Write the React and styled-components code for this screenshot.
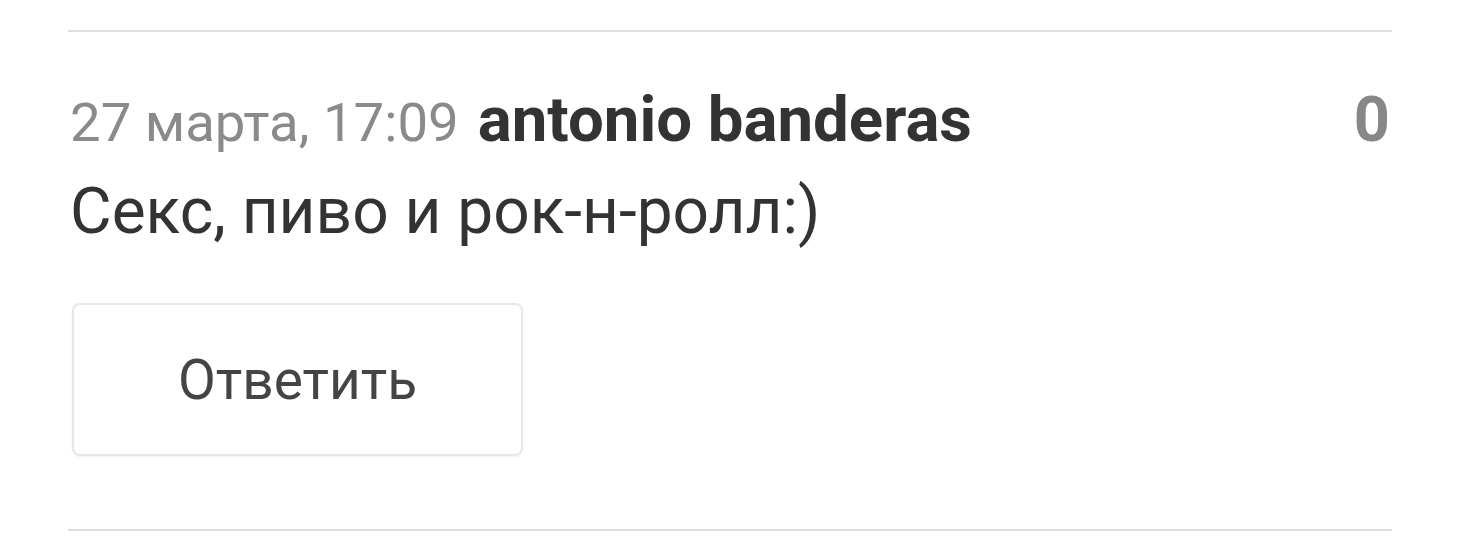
import React from "react";
import styled, { createGlobalStyle } from "styled-components";

const Global = createGlobalStyle`
  html, body { margin: 0; padding: 0; background: #fff; }
  body { font-family: Roboto, "Noto Sans", sans-serif; }
`;

const Page = styled.div`
  padding: 30px 68px 0 68px;
`;

const Comment = styled.article`
  border-top: 2px solid #dedede;
  border-bottom: 2px solid #dedede;
  padding: 50px 2px 73px 2px;
  display: flex;
  flex-direction: column;
`;

const Header = styled.div`
  display: flex;
  align-items: baseline;
  gap: 19px;
`;

const Meta = styled.span`
  font-size: 54.5px;
  color: #8a8a8a;
`;

const Author = styled.span`
  font-size: 63.5px;
  font-weight: 700;
  color: #333;
  flex: 1;
`;

const Score = styled.span`
  font-size: 63px;
  font-weight: 700;
  color: #878787;
`;

const Body = styled.p`
  margin: 17px 0 0 0;
  font-size: 64px;
  color: #333;
`;

const ReplyButton = styled.button`
  margin: 54px 0 0 2px;
  width: 451px;
  height: 153px;
  border: 2px solid #e8e8e8;
  border-radius: 8px;
  background: #fff;
  box-shadow: 0 1px 3px rgba(0,0,0,0.06);
  font-family: Roboto, "Noto Sans", sans-serif;
  font-size: 55px;
  color: #444;
  cursor: pointer;
`;

export default function App() {
  return (
    <Page>
      <Global />
      <Comment>
        <Header>
          <Meta>27 марта, 17:09</Meta>
          <Author>antonio banderas</Author>
          <Score>0</Score>
        </Header>
        <Body>Секс, пиво и рок-н-ролл:)</Body>
        <div>
          <ReplyButton>Ответить</ReplyButton>
        </div>
      </Comment>
    </Page>
  );
}
